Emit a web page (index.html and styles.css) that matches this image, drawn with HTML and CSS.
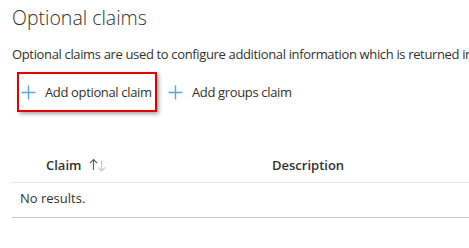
FILE: index.html
```html
<!DOCTYPE html>
<html lang="en">
<head>
    <meta charset="UTF-8">
    <title>Optional claims</title>
    <link rel="stylesheet" href="styles.css">
</head>
<body>
    <div class="blade">
        <h2 class="title">Optional claims</h2>
        <p class="intro">Optional claims are used to configure additional information which is returned in one or more tokens.</p>

        <div class="toolbar">
            <button class="cmd cmd-focus">
                <svg class="plus" viewBox="0 0 16 16"><path d="M8 0.5v15M0.5 8h15"/></svg>
                Add optional claim
            </button>
            <button class="cmd cmd-groups">
                <svg class="plus" viewBox="0 0 16 16"><path d="M8 0.5v15M0.5 8h15"/></svg>
                Add groups claim
            </button>
        </div>

        <div class="grid">
            <div class="grid-head">
                <div class="col col-claim">Claim
                    <svg class="sort" viewBox="0 0 18 14">
                        <path class="up" d="M4.5 12V1.5M1 5l3.5-3.5L8 5"/>
                        <path class="down" d="M12.5 2.5V13M9 9.5l3.5 3.5L16 9.5"/>
                    </svg>
                </div>
                <div class="col col-desc">Description</div>
            </div>
            <div class="grid-empty">No results.</div>
        </div>
    </div>
</body>
</html>
```

FILE: styles.css
```css
body {
    margin: 0;
    background: #fff;
    font-family: "Segoe UI", "Open Sans", sans-serif;
    color: #323130;
    overflow: hidden;
}
.blade {
    padding: 0 0 0 12px;
    width: 600px;
}
.title {
    font-weight: 300;
    font-size: 19.5px;
    margin: 0;
    padding-top: 5px;
    line-height: 26px;
    color: #323130;
}
.intro {
    font-size: 13px;
    letter-spacing: -0.35px;
    margin: 14px 0 0;
    line-height: 18px;
    white-space: nowrap;
}
.toolbar {
    display: flex;
    align-items: center;
    margin-top: 9px;
    margin-left: 5px;
}
.cmd {
    display: flex;
    align-items: center;
    gap: 9px;
    height: 40px;
    padding: 0 0 0 2px;
    border: 2px solid transparent;
    background: none;
    font-family: inherit;
    font-size: 13px;
    letter-spacing: -0.35px;
    white-space: nowrap;
    color: #323130;
    cursor: pointer;
}
.cmd-focus {
    border-color: #e00000;
    box-shadow: 2px 2px 4px rgba(0, 0, 0, 0.35);
    width: 140px;
}
.cmd-groups {
    padding-left: 9px;
}
.plus {
    flex-shrink: 0;
    width: 15px;
    height: 15px;
    fill: none;
    stroke: #5ea3e0;
    stroke-width: 1.5;
}
.grid {
    margin-top: 36px;
}
.grid-head {
    display: flex;
    height: 34px;
    align-items: center;
    border-bottom: 1px solid #e6e6e6;
    font-size: 13px;
    font-weight: 600;
}
.col-claim {
    display: flex;
    align-items: center;
    width: 226px;
    padding-left: 34px;
}
.col-desc {
    flex: 1;
}
.sort {
    width: 18px;
    height: 14px;
    margin-left: 8px;
    fill: none;
    stroke-width: 1.1;
}
.sort .up {
    stroke: #605e5c;
}
.sort .down {
    stroke: #c8c6c4;
}
.grid-empty {
    font-size: 13px;
    height: 34px;
    line-height: 30px;
    padding-left: 8px;
    border-bottom: 1px solid #c8c8c8;
}
```
